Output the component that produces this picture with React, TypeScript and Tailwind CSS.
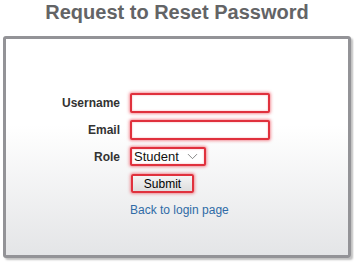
import { ChevronDown } from 'lucide-react';

const fieldCls =
  'h-[20px] w-[140px] rounded-[2px] border-2 border-[#e0313d] bg-white shadow-[0_0_3px_1px_rgba(235,40,55,0.5),inset_0_0_2px_rgba(235,40,55,0.4)] outline-none';

export default function App() {
  return (
    <div className="h-[264px] w-[354px] bg-white font-['Liberation_Sans',Arial,sans-serif]">
      <h1 className="pt-[1px] text-center text-[20px] leading-[23px] font-bold text-[#636466]">
        Request to Reset Password
      </h1>

      <div className="mx-[3px] mt-[12px] h-[222px] rounded-[3px] border-[3px] border-[#939397] bg-gradient-to-b from-white from-40% to-[#e4e5e7] shadow-[2px_2px_2px_rgba(0,0,0,0.25)]">
        <div className="grid grid-cols-[114px_auto] items-center gap-x-[10px] pt-[54px]">
          <label className="text-right text-[12px] font-bold text-[#333]">Username</label>
          <div className="flex">
            <input className={fieldCls} />
          </div>

          <label className="mt-[7px] text-right text-[12px] font-bold text-[#333]">Email</label>
          <div className="mt-[7px] flex">
            <input className={fieldCls} />
          </div>

          <label className="mt-[7px] text-right text-[12px] font-bold text-[#333]">Role</label>
          <div className="mt-[7px] flex">
            <div className="flex h-[19px] w-[76px] items-center justify-between rounded-[2px] border-2 border-[#e0313d] bg-white pr-[3px] pl-[2px] shadow-[0_0_3px_1px_rgba(235,40,55,0.5),inset_0_0_2px_rgba(235,40,55,0.4)]">
              <span className="text-[13px] leading-none text-[#111]">Student</span>
              <ChevronDown size={17} strokeWidth={1.1} className="text-[#666]" />
            </div>
          </div>

          <div />
          <div className="mt-[8px] flex pl-[1px]">
            <button className="flex h-[19px] w-[63px] items-center justify-center rounded-[2px] border-2 border-[#e0313d] bg-gradient-to-b from-[#f4f4f4] to-[#dedede] text-[12px] leading-none text-black shadow-[0_0_3px_1px_rgba(235,40,55,0.5)]">
              Submit
            </button>
          </div>

          <div />
          <a href="#" className="mt-[10px] text-[12px] leading-[14px] text-[#2f6ba6]">
            Back to login page
          </a>
        </div>
      </div>
    </div>
  );
}
